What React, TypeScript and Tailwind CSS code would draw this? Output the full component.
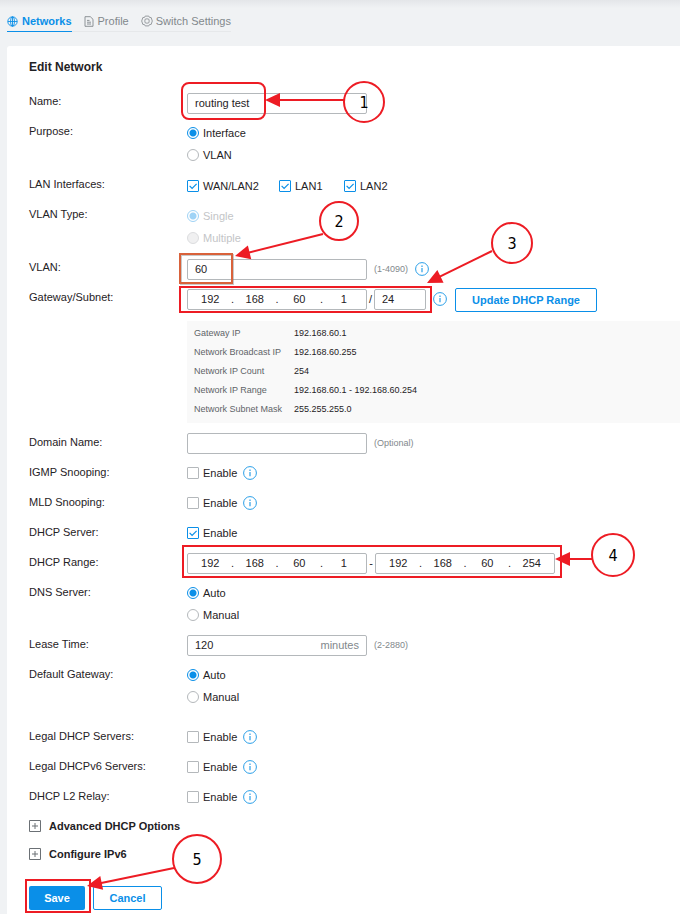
import React, { useState } from "react";

function InfoIcon() {
  return (
    <svg className="size-[14px] shrink-0" viewBox="0 0 14 14" fill="none" stroke="#2a9fe8" aria-label="Info">
      <circle cx="7" cy="7" r="6.4" strokeWidth="1" />
      <path d="M7 6v4.2M7 3.6v1.3" strokeWidth="1.2" />
    </svg>
  );
}

function GlobeIcon() {
  return (
    <svg className="size-[11px]" viewBox="0 0 11 11" fill="none" stroke="#0a8fe8" strokeWidth="0.9">
      <circle cx="5.5" cy="5.5" r="4.7" />
      <ellipse cx="5.5" cy="5.5" rx="2" ry="4.7" />
      <path d="M5.5 .8v9.4M.8 5.5h9.4" />
    </svg>
  );
}

function ProfileIcon() {
  return (
    <svg className="h-[11px] w-[10px]" viewBox="0 0 10 11" fill="none" stroke="#82888c" strokeWidth="0.9">
      <path d="M1 .7h5.3L9 3.3v7H1zM3 4.4h2.5M3 6.2h4M3 8h4" />
    </svg>
  );
}

function SettingsIcon() {
  return (
    <svg className="size-[12px]" viewBox="0 0 12 12" fill="none" stroke="#8d9296" strokeWidth="0.9">
      <path d="M4.2 1.1h3.6l.8 1.4 1.6.1L11.3 6l-1.1 3.4-1.6.1-.8 1.4H4.2l-.8-1.4-1.6-.1L.7 6l1.1-3.4 1.6-.1z" />
      <rect x="3.9" y="3.9" width="4.2" height="4.2" rx="1.2" />
    </svg>
  );
}

function PlusBox() {
  return (
    <svg className="size-[12px]" viewBox="0 0 12 12" fill="none" stroke="#6b7075">
      <path d="M.5.5h11v11H.5zM3 6h6M6 3v6" />
    </svg>
  );
}

function Radio({ name, label, checked, disabled }: { name: string; label: string; checked?: boolean; disabled?: boolean }) {
  return (
    <label className={`flex h-[22px] items-center gap-1 ${disabled ? "text-[#c3c5c7]" : ""}`}>
      <input
        type="radio"
        name={name}
        defaultChecked={checked}
        disabled={disabled}
        className="size-[12px] appearance-none rounded-full border border-[#b4b8bb] bg-white checked:border-[#0a8fe8] checked:bg-[radial-gradient(circle,#0a8fe8_3px,#fff_4px)] disabled:border-[#dcdddf] disabled:bg-[#f0f0f1] disabled:checked:border-[#9fd3f6] disabled:checked:bg-[radial-gradient(circle,#9fd3f6_3px,#fff_4px)]"
      />
      {label}
    </label>
  );
}

function Check({ label, checked }: { label: string; checked?: boolean }) {
  const [on, setOn] = useState(!!checked);
  return (
    <label className="flex h-[22px] items-center gap-1">
      <span className="grid">
        <input
          type="checkbox"
          checked={on}
          onChange={() => setOn(!on)}
          className="col-start-1 row-start-1 size-[12px] appearance-none rounded-[1px] border border-[#b4b8bb] bg-white checked:border-[#0a8fe8]"
        />
        {on && (
          <svg className="pointer-events-none col-start-1 row-start-1 size-[12px]" viewBox="0 0 12 12" fill="none" stroke="#0a8fe8" strokeWidth="1.2">
            <path d="M2.6 5.8l2.5 2.6 4.5-4.6" />
          </svg>
        )}
      </span>
      {label}
    </label>
  );
}

function Row({ label, htmlFor, children }: { label: string; htmlFor?: string; children: React.ReactNode }) {
  return (
    <div className="grid grid-cols-[158px_1fr] items-start">
      {htmlFor ? <label htmlFor={htmlFor}>{label}</label> : <span>{label}</span>}
      <div>{children}</div>
    </div>
  );
}

function IpInput({ parts, label, id }: { parts: string[]; label: string; id?: string }) {
  return (
    <div className="flex h-[21px] w-[180px] items-center rounded-[2px] border border-[#b4b8bb] bg-white px-[2px]">
      {parts.map((p, i) => (
        <React.Fragment key={i}>
          {i > 0 && <span className="w-1 text-center">.</span>}
          <input
            id={i === 0 ? id : undefined}
            aria-label={`${label} part ${i + 1}`}
            defaultValue={p}
            className="w-0 min-w-0 flex-1 bg-transparent text-center outline-none"
          />
        </React.Fragment>
      ))}
    </div>
  );
}

const box = "h-[21px] w-[180px] rounded-[2px] border border-[#b4b8bb] bg-white px-[7px] outline-none";
const line = "flex h-[22px] items-center";
const hint = "text-[9px] text-[#82888c]";

const summary = [
  ["Gateway IP", "192.168.60.1"],
  ["Network Broadcast IP", "192.168.60.255"],
  ["Network IP Count", "254"],
  ["Network IP Range", "192.168.60.1 - 192.168.60.254"],
  ["Network Subnet Mask", "255.255.255.0"],
];

const steps = [
  { n: "1", cx: 364, cy: 102, r: 20, from: [344, 100], to: [265, 100] },
  { n: "2", cx: 339, cy: 221, r: 19, from: [323, 234], to: [235, 256] },
  { n: "3", cx: 512, cy: 243, r: 20, from: [492, 251], to: [427, 283] },
  { n: "4", cx: 613, cy: 555, r: 21, from: [592, 559], to: [555, 559] },
  { n: "5", cx: 197, cy: 859, r: 24, from: [174, 868], to: [87, 886] },
];

function Annotations() {
  return (
    <svg className="pointer-events-none absolute top-0 left-0 h-[914px] w-[680px]" viewBox="0 0 680 914" fill="none" stroke="#ed1c24" strokeWidth="2">
      <rect x="182" y="83" width="83" height="36" rx="7" />
      <rect x="181" y="255" width="52" height="29" stroke="#777" strokeOpacity=".4" />
      <rect x="180" y="254" width="52" height="29" stroke="#d9623b" />
      <rect x="180" y="287" width="251" height="25" />
      <rect x="183" y="546" width="378" height="31" />
      <rect x="26" y="880" width="64" height="32" />
      {steps.map((s) => {
        const angle = (Math.atan2(s.to[1] - s.from[1], s.to[0] - s.from[0]) * 180) / Math.PI;
        return (
          <g key={s.n}>
            <circle cx={s.cx} cy={s.cy} r={s.r} />
            <line x1={s.from[0]} y1={s.from[1]} x2={s.to[0] + (s.from[0] - s.to[0]) * 0.15} y2={s.to[1] + (s.from[1] - s.to[1]) * 0.15} />
            <path d="M0 0L-15 -7V7z" fill="#ed1c24" stroke="none" transform={`translate(${s.to[0]} ${s.to[1]}) rotate(${angle})`} />
            <text x={s.cx} y={s.cy + 6} textAnchor="middle" fill="#000" stroke="none" className="font-['DejaVu_Sans_Condensed','DejaVu_Sans',sans-serif] text-[16px]">
              {s.n}
            </text>
          </g>
        );
      })}
    </svg>
  );
}

export default function App() {
  return (
    <div className="relative min-h-screen overflow-hidden bg-[#f0f2f4] pl-[7px] font-['Liberation_Sans',Arial,sans-serif] text-[11px] text-[#1f2225]">
      <div className="-ml-[7px] h-2 bg-linear-to-b from-[#e4e6e9] to-[#f0f2f4]" />
      <nav className="flex h-6">
        <div className="flex gap-3 border-b border-[#e6e8ea] text-[#82888c]">
          <a href="#networks" className="-mb-px flex items-center gap-1 border-b border-[#0a8fe8] pt-[3px] font-bold text-[#0a8fe8]">
            <GlobeIcon />
            Networks
          </a>
          <a href="#profile" className="flex items-center gap-1 pt-[3px]">
            <ProfileIcon />
            Profile
          </a>
          <a href="#switch" className="flex items-center gap-[3px] pt-[3px]">
            <SettingsIcon />
            Switch Settings
          </a>
        </div>
      </nav>

      <main className="mt-[14px] min-h-[868px] rounded-tl-[3px] bg-white pt-3 pl-[22px]">
        <h1 className="h-[34px] text-[12px] leading-[18px] font-bold">Edit Network</h1>
        <form className="flex flex-col gap-2" onSubmit={(e) => e.preventDefault()}>
          <section className="flex flex-col gap-2 leading-[18px]">
            <Row label="Name:" htmlFor="name">
              <div className={line}>
                <input id="name" defaultValue="routing test" className={box} />
              </div>
            </Row>
            <Row label="Purpose:">
              <div className="pb-px">
                <Radio name="purpose" label="Interface" checked />
                <Radio name="purpose" label="VLAN" />
              </div>
            </Row>
            <Row label="LAN Interfaces:">
              <div className="grid w-[220px] grid-cols-[92px_65px_1fr]">
                <Check label="WAN/LAN2" checked />
                <Check label="LAN1" checked />
                <Check label="LAN2" checked />
              </div>
            </Row>
            <Row label="VLAN Type:">
              <div className="pb-px">
                <Radio name="vlantype" label="Single" checked disabled />
                <Radio name="vlantype" label="Multiple" disabled />
              </div>
            </Row>
            <Row label="VLAN:" htmlFor="vlan">
              <div className={line}>
                <input id="vlan" defaultValue="60" className={box} />
                <span className={`${hint} w-12 pl-[7px]`}>(1-4090)</span>
                <InfoIcon />
              </div>
            </Row>
            <Row label="Gateway/Subnet:" htmlFor="gateway">
              <div className="flex h-6 items-start">
                <div className={line}>
                  <IpInput id="gateway" label="Gateway" parts={["192", "168", "60", "1"]} />
                  <span className="w-[7px] text-center">/</span>
                  <input aria-label="Subnet prefix" defaultValue="24" className="mr-[7px] h-[21px] w-[52px] rounded-[2px] border border-[#b4b8bb] bg-white px-[7px] outline-none" />
                  <InfoIcon />
                </div>
                <button type="button" className="ml-2 h-6 rounded-[2px] border border-[#0a8fe8] px-4 font-bold whitespace-nowrap text-[#0a8fe8]">
                  Update DHCP Range
                </button>
              </div>
            </Row>
          </section>
          <div className="mt-px mb-px ml-[158px] bg-[#f9f9f9] pt-[3px] pb-1 pl-[7px] text-[9px]">
            <table>
              <tbody>
                {summary.map(([k, v]) => (
                  <tr key={k} className="h-[19px]">
                    <th scope="row" className="w-[100px] text-left font-normal text-[#5f6468]">{k}</th>
                    <td>{v}</td>
                  </tr>
                ))}
              </tbody>
            </table>
          </div>
          <section className="flex flex-col gap-2 leading-5">
            <Row label="Domain Name:" htmlFor="domain">
              <div className={line}>
                <input id="domain" className={box} />
                <span className={`${hint} pl-[7px]`}>(Optional)</span>
              </div>
            </Row>
            <Row label="IGMP Snooping:">
              <div className={`${line} gap-[6px]`}><Check label="Enable" /><InfoIcon /></div>
            </Row>
            <Row label="MLD Snooping:">
              <div className={`${line} gap-[6px]`}><Check label="Enable" /><InfoIcon /></div>
            </Row>
            <Row label="DHCP Server:">
              <div className="flex"><Check label="Enable" checked /></div>
            </Row>
            <Row label="DHCP Range:" htmlFor="range">
              <div className={line}>
                <IpInput id="range" label="Range start" parts={["192", "168", "60", "1"]} />
                <span className="w-2 text-center">-</span>
                <IpInput label="Range end" parts={["192", "168", "60", "254"]} />
              </div>
            </Row>
            <Row label="DNS Server:">
              <Radio name="dns" label="Auto" checked />
              <Radio name="dns" label="Manual" />
            </Row>
            <Row label="Lease Time:" htmlFor="lease">
              <div className={line}>
                <div className="flex h-[21px] w-[180px] items-center rounded-[2px] border border-[#b4b8bb] px-[7px]">
                  <input id="lease" defaultValue="120" className="w-0 flex-1 outline-none" />
                  <span className="text-[#82888c]">minutes</span>
                </div>
                <span className={`${hint} pl-[7px]`}>(2-2880)</span>
              </div>
            </Row>
            <Row label="Default Gateway:">
              <div className="pb-[10px]">
                <Radio name="gw" label="Auto" checked />
                <Radio name="gw" label="Manual" />
              </div>
            </Row>
            {["Legal DHCP Servers:", "Legal DHCPv6 Servers:", "DHCP L2 Relay:"].map((l) => (
              <Row key={l} label={l}>
                <div className={`${line} gap-[6px]`}><Check label="Enable" /><InfoIcon /></div>
              </Row>
            ))}
          </section>
          <div className="-mt-1">
            {["Advanced DHCP Options", "Configure IPv6"].map((t) => (
              <button key={t} type="button" className="flex h-7 items-center gap-2 font-bold">
                <PlusBox />
                {t}
              </button>
            ))}
          </div>
          <div className="mt-[10px] flex gap-2">
            <button type="submit" className="h-6 w-14 rounded-[2px] bg-[#0a8fe8] font-bold text-white">Save</button>
            <button type="button" className="h-6 w-[69px] rounded-[2px] border border-[#0a8fe8] font-bold text-[#0a8fe8]">Cancel</button>
          </div>
        </form>
      </main>
      <Annotations />
    </div>
  );
}
